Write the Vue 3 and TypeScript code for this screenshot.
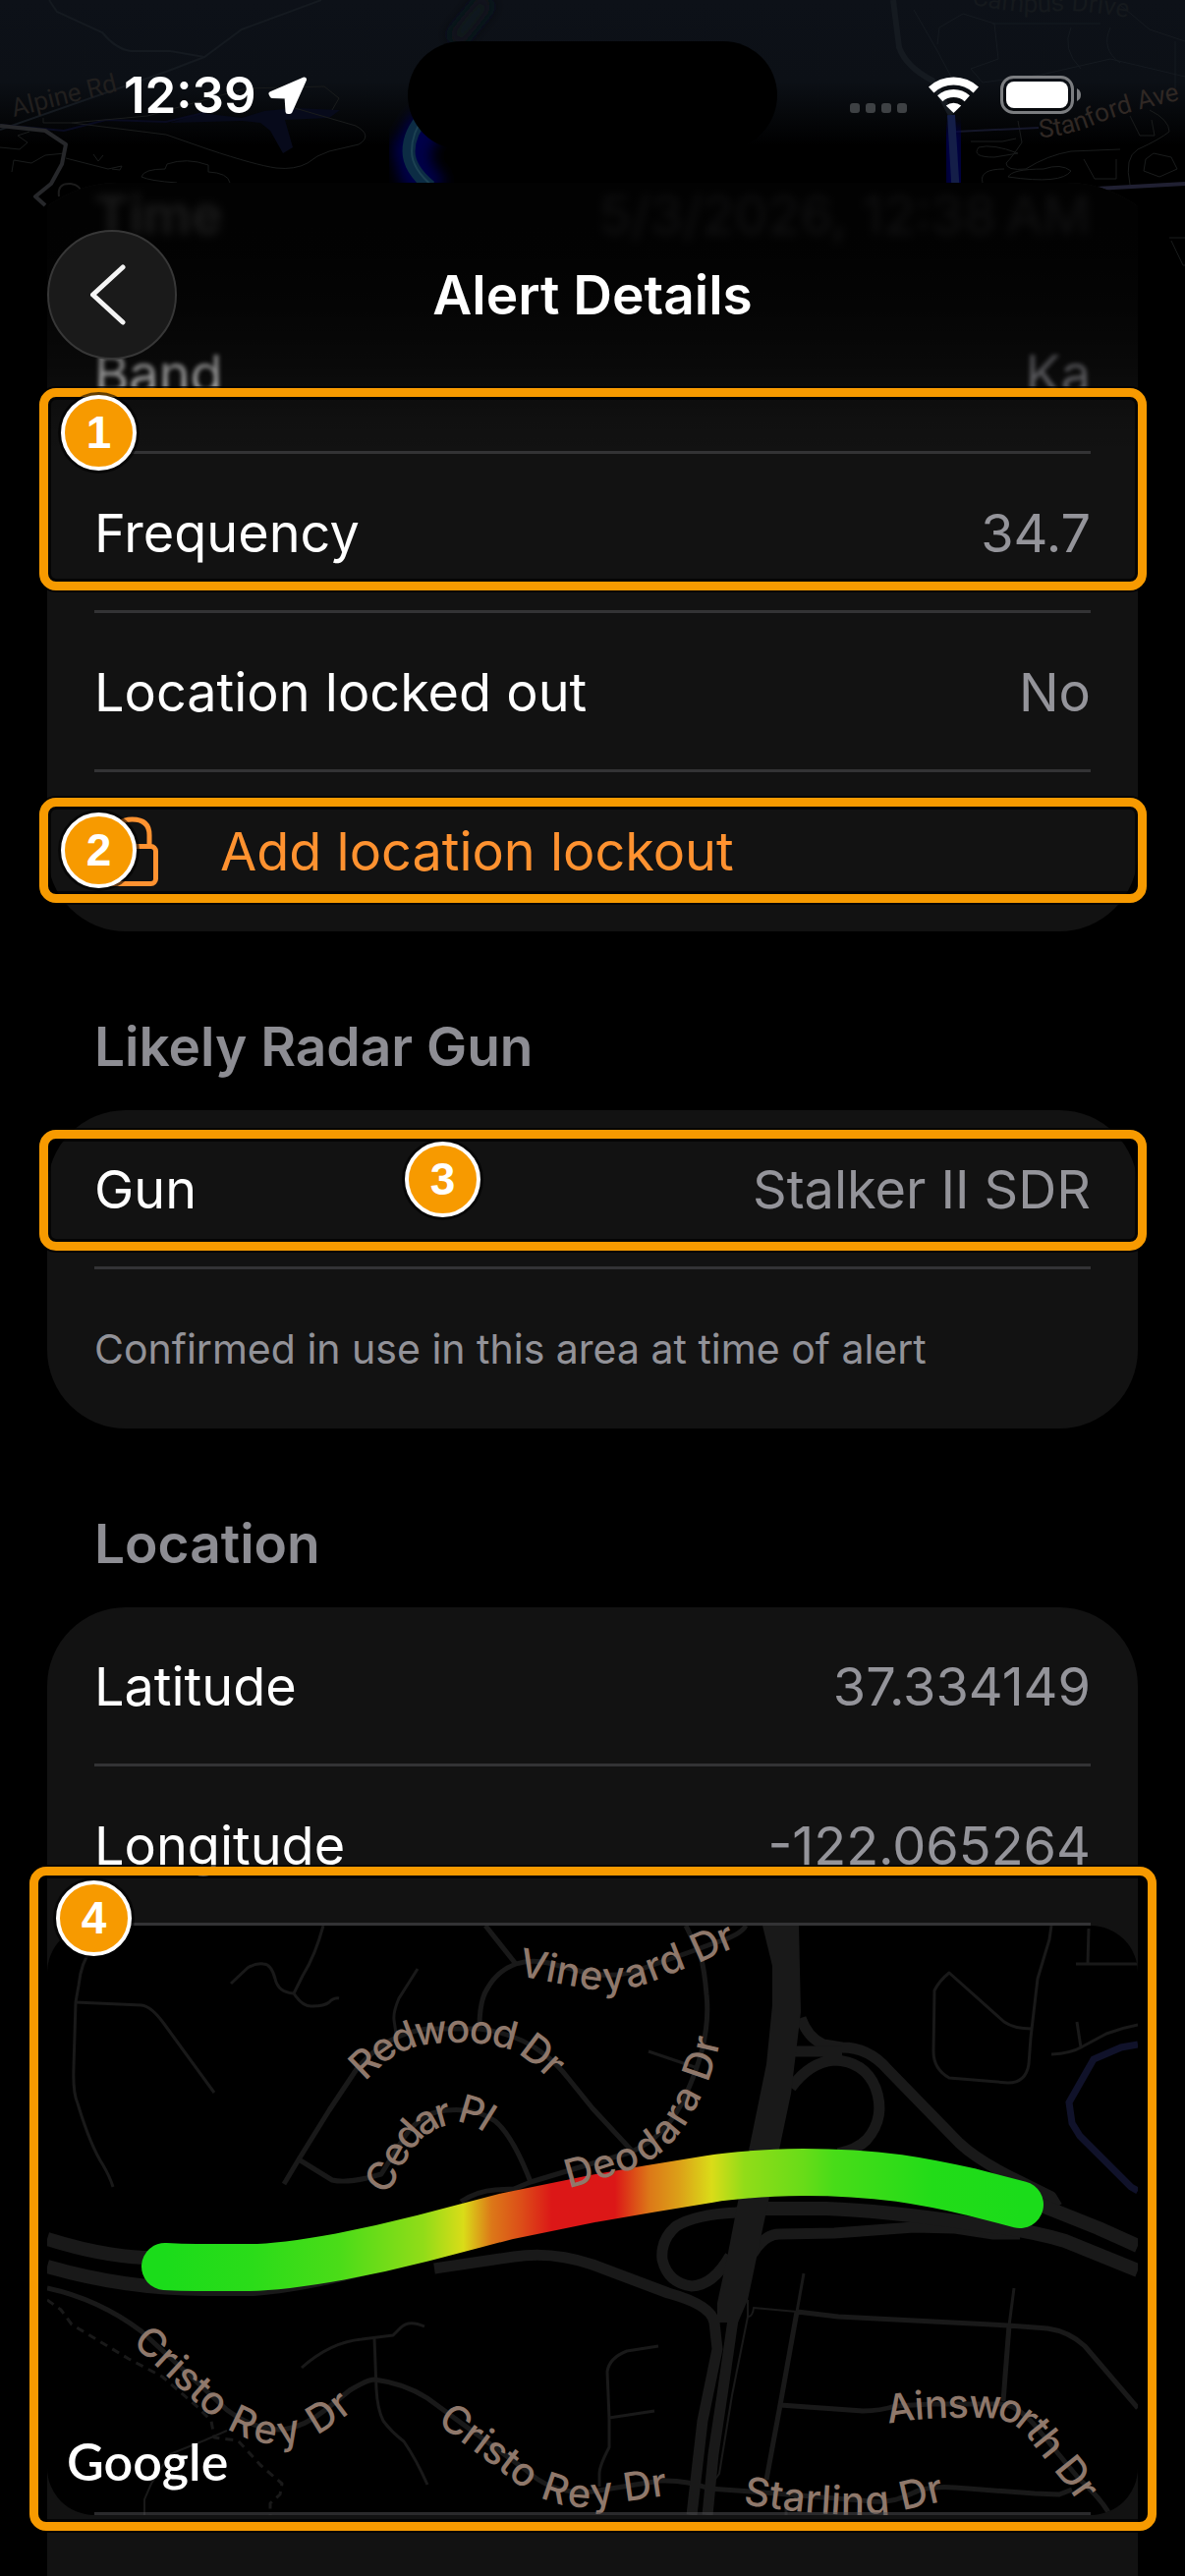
<script setup lang="ts">
interface Detail {
  label: string
  value: string
}

interface RoadGroup {
  width: number
  paths: string[]
}

interface MapLabel {
  id: string
  text: string
  line: string
}

const coordinates: Detail[] = [
  { label: 'Latitude', value: '37.334149' },
  { label: 'Longitude', value: '-122.065264' },
]

const roads: RoadGroup[] = [
  {
    width: 2,
    paths: [
      'M183 514L160 524L125 538L106 568L99 584V600',
      'M713 381V398L697 478L684 558L678 566',
      'M713 398Q718 398 719 389L763 393',
    ],
  },
  {
    width: 3,
    paths: [
      'M47 20Q34 38 32 61L29 78L27 144Q26 170 31 181Q44 224 57 244Q64 256 67 266',
      'M29 78L96 81Q106 82 119 100L170 170',
      'M187 59L204 43Q212 38 220 39Q228 39 232 54Q235 68 251 69Q260 83 270 82Q282 82 287 78Q292 73 297 74',
      'M281 0Q273 30 260 51L251 69',
      'M377 44L358 74Q352 88 353 96L355 110',
      'M612 128L659 144',
      'M1022 0L1020 14L1008 54L1001 114L999 141Q996 160 978 160L918 155Q902 146 902 128L903 66Q908 56 918 48L974 98Q984 105 1002 105',
      'M1060 3L1059 39M1047 39H1110',
      'M1022 131Q1042 130 1052 124L1078 110Q1094 104 1110 101M1048 98L1052 124',
      'M622 428L590 433Q572 440 570 454L572 501V531Q562 550 562 558V571M572 501L618 494',
      'M259 450Q288 424 320 421L352 417Q356 413 360 409Q368 401 384 408',
      'M333 420L335 471Q336 492 342 504Q350 515 363 525Q376 544 387 569',
      'M770 354L763 393M984 369L979 407M752 590V600',
    ],
  },
  {
    width: 5,
    paths: [
      'M241 263L256 238L287 188L315 146Q345 110 387 105H440Q480 110 506 131Q520 142 530 155L555 186L595 229',
      'M446 0L477 39M440 103Q440 76 448 64Q458 46 477 39Q492 34 510 38L545 47Q578 55 605 44L651 28L678 18Q706 10 711 0',
      'M256 238L290 259Q303 262 325 257L340 253L358 224Q377 190 406 188Q436 185 456 199Q474 214 492 261',
      'M421 281Q438 270 456 269L475 268L492 261L555 242L593 231Q632 214 650 172Q676 116 671 70Q669 45 665 31L650 0',
      'M0 369Q52 380 96 413L156 468L183 493Q212 514 240 513Q262 510 283 493L308 473Q326 462 333 462Q364 466 387 481L421 506L487 554Q515 580 555 576L624 565Q650 564 674 573L717 576L840 586Q860 588 880 578Q896 570 924 572L1005 578L1030 579L1043 574',
      'M763 393L746 488L732 564M763 393L805 398L978 407L1018 410Q1040 413 1056 428L1110 491M979 407L973 484',
      'M746 488L830 494Q848 494 863 489L900 487H973Q990 490 1008 512L1050 563Q1070 580 1082 600',
    ],
  },
  {
    width: 11,
    paths: [
      'M767 94Q774 114 790 121L809 124Q836 124 855 146L928 221Q948 240 990 260L1022 276L1028 286',
      'M757 128L809 128M757 165Q776 139 801 137Q832 138 843 165Q854 195 834 218Q824 228 805 232',
      'M734 288L701 292Q660 294 640 306Q624 320 626 340Q632 364 656 367Q678 366 695 336',
      'M718 334Q730 314 745 314L801 313L882 307L924 308L963 314H990',
      'M394 349L475 337Q514 331 555 345L632 374Q676 386 679 404L682 431L667 504L656 600',
      'M698 401L688 471L678 538L672 600',
    ],
  },
  {
    width: 14,
    paths: [
      'M0 319Q54 336 98 338H130',
      'M0 347Q80 370 160 370H210Q260 366 320 350L420 322L555 288Q640 268 709 262L770 258Q860 260 940 282L990 292',
      'M720 288H793Q850 290 940 303Q1000 310 1036 321L1110 351',
      'M960 262L1020 288L1070 308L1110 326',
    ],
  },
]

const streetLabels: MapLabel[] = [
  { id: 'vineyard', text: 'Vineyard Dr', line: 'M481 36Q530 46 556 50Q580 53 605 45L651 27L678 15L730 -6' },
  { id: 'redwood', text: 'Redwood Dr', line: 'M313 148L333 129Q355 110 387 106Q440 100 475 112Q500 122 530 155L550 180' },
  { id: 'cedar', text: 'Cedar Pl', line: 'M332 267L344 248Q358 216 375 203Q400 184 430 187Q455 193 475 220' },
  { id: 'deodara', text: 'Deodara Dr', line: 'M527 253L555 245L593 233Q622 220 640 190Q664 150 671 110L672 60' },
  { id: 'cristo-west', text: 'Cristo Rey Dr', line: 'M96 414L156 470L183 494Q212 514 240 513Q262 510 283 496L330 460' },
  { id: 'cristo-east', text: 'Cristo Rey Dr', line: 'M405 494L487 556Q515 576 545 577Q575 574 595 570L650 562' },
  { id: 'ainsworth', text: 'Ainsworth Dr', line: 'M854 492L882 488Q930 484 970 487Q1000 494 1016 520L1050 562L1080 605' },
  { id: 'starling', text: 'Starling Dr', line: 'M710 574Q760 582 800 584Q840 587 870 580L940 564' },
]

const heatStops: Array<[number, string]> = [
  [120, '#1bdc1a'],
  [210, '#2bdc19'],
  [298, '#4bdc18'],
  [383, '#92dc18'],
  [424, '#dadc18'],
  [452, '#dc7818'],
  [483, '#dc4c18'],
  [514, '#dc1717'],
  [578, '#dc1717'],
  [613, '#dc7818'],
  [643, '#dca018'],
  [676, '#dadc18'],
  [709, '#92dc18'],
  [770, '#68dc18'],
  [801, '#48dc18'],
  [901, '#22dc18'],
  [990, '#1bdc1a'],
]

const heatOffset = (x: number): string => ((x - 96) / 918).toFixed(3)
</script>

<template>
  <div class="screen">
    <!-- Dimmed map behind the sheet -->
    <svg class="backdrop" viewBox="0 0 1206 330" fill="none" aria-hidden="true">
      <defs>
        <linearGradient id="sky" x1="0" y1="0" x2="0" y2="1">
          <stop offset="0" stop-color="#0d1118" />
          <stop offset=".25" stop-color="#0c1016" />
          <stop offset=".45" stop-color="#000" />
        </linearGradient>
        <filter id="glow" x="-100%" y="-50%" width="300%" height="200%">
          <feGaussianBlur stdDeviation="7" />
        </filter>
        <path id="stanford" d="M1058 140Q1090 138 1116 126Q1150 112 1206 101" />
        <path id="campus" d="M988 4Q1040 16 1080 11Q1110 10 1180 24" />
      </defs>
      <rect width="1206" height="330" fill="url(#sky)" />
      <g stroke="#151a20" stroke-width="2">
        <path d="M50 0L58 12L104 33Q118 50 133 52H173L208 58" />
        <path d="M327 0L246 30L208 58L169 73L0 132" />
        <path d="M909 0L915 48Q922 68 949 82L968 117" stroke-width="6" />
        <path d="M930 10L953 50L970 82M954 45L956 28L980 14L1012 24L1016 60L988 70L1000 84L1060 76L1130 60L1206 78M1010 24L1120 24M1090 28Q1080 50 1100 70M1130 28Q1120 50 1140 64M1140 5L1170 30L1206 42M1196 42V90" stroke-width="1" />
      </g>
      <path d="M173 125L204 115L246 120L269 113L300 110L346 112L335 120L290 122L298 150L288 156L275 133L265 125L246 123Z" fill="#070a1b" />
      <path d="M0 127L65 133L108 122L169 124L215 113" stroke="#090b20" stroke-width="2" />
      <g stroke="#1a1c1c" stroke-width="1">
        <path d="M73 125L169 137L212 152Q260 168 281 171Q300 173 313 166Q322 158 335 154L365 147Q380 138 362 128L300 110" />
        <path d="M44 120V125H73L150 118L250 90L330 88L345 100L338 112M0 150L20 152L28 145L18 138L30 134M12 175L14 163L32 166L46 158L66 156M67 161L110 172L124 169L122 173L114 172M95 157L100 164L105 158" />
        <path d="M144 180Q146 172 168 172L170 167Q190 160 212 168V175Q232 176 234 186M144 180Q152 184 180 186" />
        <path d="M988 144H1020L1034 141M1036 123L1040 145Q1030 160 1024 166Q1024 174 1044 172Q1066 158 1090 154L1140 152M1036 156Q1010 146 996 150Q988 160 1012 160L1036 156M1000 186Q996 172 1022 172M1026 180Q1030 172 1062 172Q1080 166 1090 174Q1080 188 1026 180M1103 162L1114 182H1136V162M1150 188Q1144 160 1158 152Q1180 142 1190 134Q1190 122 1170 112M1150 118L1160 138H1175L1172 122M1166 162L1174 156L1192 160L1198 172L1180 180L1164 174Z" />
        <path d="M1190 242H1206M1192 245L1204 270H1206" />
      </g>
      <path d="M0 128L46 133L67 147L63 167L52 187L36 200L46 209" stroke="#26272a" stroke-width="4" stroke-linejoin="round" />
      <path d="M60 200Q58 186 72 187Q82 188 84 198" stroke="#1c1c1c" stroke-width="2" />
      <path d="M1116 192L1206 187" stroke="#202032" stroke-width="4" />
      <path d="M972 134L1057 130" stroke="#15172a" stroke-width="2" />
      <path d="M496 0L462 42" stroke="#0d191f" stroke-width="18" filter="url(#glow)" />
      <path d="M436 124L418 153L424 176L440 196" stroke="#00004a" stroke-width="36" filter="url(#glow)" />
      <path d="M432 118Q416 135 416 154Q416 172 438 190" stroke="#0c2c44" stroke-width="13" />
      <path d="M432 118Q419 135 419 154Q419 172 441 190" stroke="#1c4152" stroke-width="2" />
      <path d="M968 130L973 200" stroke="#000048" stroke-width="24" filter="url(#glow)" />
      <path d="M968 117L973 200" stroke="#141e48" stroke-width="8" />
      <g class="backdrop-label">
        <text transform="translate(14 119) rotate(-14)" fill="#211f1e">Alpine Rd</text>
        <text fill="#302824"><textPath href="#stanford">Stanford Ave</textPath></text>
        <text fill="#15191d"><textPath href="#campus">Campus Drive</textPath></text>
      </g>
    </svg>

    <header class="status">
      <div class="status-left">
        <time>12:39</time>
        <svg width="40" height="39" viewBox="0 0 40 39" aria-label="Location in use">
          <path d="M36.500 3L3 17.500L4 19.500L19 20L20 35.500L22 35.500Z" fill="#fff" stroke="#fff" stroke-width="5" stroke-linejoin="round" />
        </svg>
      </div>
      <div class="island"></div>
      <div class="status-right">
        <svg width="58" height="38" viewBox="0 0 58 38" fill="#3e4144" aria-label="No signal">
          <rect y="27" width="10" height="10" rx="3" />
          <rect x="16" y="27" width="10" height="10" rx="3" />
          <rect x="32" y="27" width="10" height="10" rx="3" />
          <rect x="48" y="27" width="10" height="10" rx="3" />
        </svg>
        <svg width="51" height="38" viewBox="0 0 51 38" fill="none" stroke="#fff" stroke-width="8" aria-label="Wi-Fi">
          <path d="M2.700 13.500A33.500 33.500 0 0 1 48.300 13.500" />
          <path d="M11.700 22.200A21 21 0 0 1 39.300 22.200" />
          <path d="M25.500 37L17.800 29.500A12 12 0 0 1 33.200 29.500Z" fill="#fff" stroke="none" />
        </svg>
        <svg width="83" height="40" viewBox="0 0 83 40" fill="none" aria-label="Battery full">
          <rect x="1.500" y="1.500" width="72" height="36" rx="12" stroke="#7b7d80" stroke-width="3" />
          <rect x="6" y="6" width="63" height="27" rx="8" fill="#fff" />
          <path d="M78 13Q82 15 82 19.500Q82 24 78 26Z" fill="#7b7d80" />
        </svg>
      </div>
    </header>

    <main class="sheet">
      <div class="navbar">
        <button class="back" type="button" aria-label="Back">
          <svg width="44" height="68" viewBox="0 0 44 68" fill="none" stroke="#f4f4f4" stroke-width="5" stroke-linecap="round" stroke-linejoin="round">
            <path d="M33 6L2.500 34L33 62" />
          </svg>
        </button>
        <h1>Alert Details</h1>
      </div>

      <dl class="card first">
        <div class="row far">
          <dt>Time</dt>
          <dd>5/3/2026, 12:38&#8239;AM</dd>
        </div>
        <div class="row near">
          <dt>Band</dt>
          <dd>Ka</dd>
        </div>
        <div class="row">
          <dt>Frequency</dt>
          <dd>34.7</dd>
          <div class="callout callout-frequency"><span class="badge">1</span></div>
        </div>
        <div class="row">
          <dt>Location locked out</dt>
          <dd>No</dd>
        </div>
        <div class="row last">
          <button class="lockout" type="button">
            <svg width="54" height="74" viewBox="0 0 54 74" fill="none" stroke="#ff9230" stroke-width="5" aria-hidden="true">
              <rect x="2.500" y="31.500" width="48" height="38" rx="5" />
              <path d="M10 31V20Q10 4 26.500 4Q44 4 44 20V31" />
            </svg>
            Add location lockout
          </button>
          <div class="callout callout-lockout"><span class="badge">2</span></div>
        </div>
      </dl>

      <h2>Likely Radar Gun</h2>
      <dl class="card">
        <div class="row">
          <dt>Gun</dt>
          <dd>Stalker II SDR</dd>
          <div class="callout callout-gun"><span class="badge">3</span></div>
        </div>
        <div class="row last">
          <dd class="note">Confirmed in use in this area at time of alert</dd>
        </div>
      </dl>

      <h2>Location</h2>
      <section class="card open">
        <dl>
          <div v-for="item in coordinates" :key="item.label" class="row">
            <dt>{{ item.label }}</dt>
            <dd>{{ item.value }}</dd>
          </div>
        </dl>
        <div class="map-row">
          <svg class="map" viewBox="0 0 1110 600" fill="none" role="img" aria-label="Signal strength along the route">
            <defs>
              <linearGradient id="heat" gradientUnits="userSpaceOnUse" x1="96" y1="0" x2="1014" y2="0">
                <stop v-for="[x, color] in heatStops" :key="x" :offset="heatOffset(x)" :stop-color="color" />
              </linearGradient>
              <path v-for="label in streetLabels" :id="label.id" :key="label.id" :d="label.line" />
            </defs>
            <rect width="1110" height="600" fill="#000" />
            <g stroke="#191919" stroke-linejoin="round">
              <g v-for="group in roads" :key="group.width" :stroke-width="group.width">
                <path v-for="d in group.paths" :key="d" :d="d" />
              </g>
              <path stroke-width="3" stroke-dasharray="8 6" d="M0 381L14 391L25 406L83 441L117 459L152 489L167 504L170 521L194 524L217 549L239 568L237 579L227 588V600" />
            </g>
            <path d="M728 0L738 41V81L732 141L714 229L703 281L693 333L682 384V404H703L713 381L723 333L734 281L745 228L757 171L767 88L765 0Z" fill="#191919" />
            <path d="M1110 121L1093 124L1065 136L1040 180L1043 201L1051 214L1103 266L1110 270" stroke="#10122a" stroke-width="7" />
            <path
              stroke="url(#heat)"
              stroke-width="48"
              stroke-linecap="round"
              stroke-linejoin="round"
              d="M120 347Q136 348 152 348H205Q237 348 298 337Q340 329 383 318L467 296L555 278L613 268L674 258Q709 252 770 251Q820 251 867 257Q901 262 940 271L990 284"
            />
            <g class="street">
              <text v-for="label in streetLabels" :key="label.id"><textPath :href="`#${label.id}`">{{ label.text }}</textPath></text>
            </g>
            <text class="brand" x="20" y="565">Google</text>
          </svg>
          <div class="callout callout-map"><span class="badge">4</span></div>
        </div>
      </section>
    </main>
  </div>
</template>

<style>
body {
  margin: 0;
  background: #000;
}
</style>

<style scoped>
.screen {
  position: relative;
  display: flex;
  flex-direction: column;
  min-height: 100vh;
  overflow: hidden;
  background: #000;
  color: #fff;
  font-family: Inter, "Liberation Sans", sans-serif;
  font-size: 54px;
  line-height: 68px;
}

.backdrop {
  position: absolute;
  top: 0;
  left: 0;
  width: 100%;
}

.backdrop-label {
  font-family: Roboto, sans-serif;
  font-size: 26px;
}

.status {
  position: relative;
  display: grid;
  grid-template-columns: 1fr 376px 1fr;
  align-items: center;
  height: 110px;
  padding: 42px 0 34px;
}

.status-left,
.status-right {
  display: flex;
  align-items: center;
}

.status-left {
  gap: 12px;
  padding-left: 126px;
  font-size: 51px;
  font-weight: 600;
}

.status-right {
  justify-content: flex-end;
  gap: 22px;
  padding-right: 105px;
}

.island {
  height: 110px;
  border-radius: 55px;
  background: #000;
}

.sheet {
  position: relative;
  display: flex;
  flex: 1;
  flex-direction: column;
  padding: 0 48px;
  overflow: hidden;
  border-radius: 120px 120px 0 0;
  background: #000;
}

.navbar {
  position: absolute;
  z-index: 2;
  top: 0;
  right: 0;
  left: 0;
  display: grid;
  grid-template-columns: 132px 1fr 132px;
  align-items: center;
  height: 132px;
  padding: 48px 48px 96px;
  background: linear-gradient(rgba(0, 0, 0, 0.9) 0, rgba(0, 0, 0, 0.88) 72px, rgba(0, 0, 0, 0.72) 130px, rgba(0, 0, 0, 0.5) 186px, rgba(0, 0, 0, 0.12) 240px, transparent 276px);
}

.navbar h1 {
  margin: 0;
  font-size: 55px;
  font-weight: 600;
  text-align: center;
}

.back {
  display: flex;
  align-items: center;
  justify-content: center;
  width: 132px;
  height: 132px;
  padding: 0;
  border: 2px solid #373737;
  border-radius: 50%;
  background: #1a1a1a;
}

.card {
  margin: 0;
  border-radius: 80px;
  background: #121212;
}

.first {
  margin-top: -48px;
}

.open {
  flex: 1;
  border-radius: 80px 80px 0 0;
}

.open dl {
  margin: 0;
}

.row {
  position: relative;
  display: flex;
  align-items: center;
  justify-content: space-between;
  height: 162px;
  padding: 0 48px;
}

.row::after,
.map-row::after {
  position: absolute;
  right: 48px;
  bottom: 0;
  left: 48px;
  height: 3px;
  background: rgba(84, 84, 88, 0.5);
  content: "";
}

.row.far::after,
.row.last::after {
  content: none;
}

dd {
  margin: 0;
  color: rgba(235, 235, 245, 0.6);
}

.far dt {
  font-weight: 600;
  filter: blur(5px);
}

.far dd {
  filter: blur(5px);
}

.near dt,
.near dd {
  filter: blur(2px);
}

.note {
  font-size: 41px;
}

.lockout {
  display: flex;
  align-items: center;
  gap: 62px;
  padding: 0 12px;
  border: 0;
  background: none;
  color: #ff9230;
  font: inherit;
}

h2 {
  margin: 0;
  padding: 83px 48px 31px;
  color: rgba(235, 235, 245, 0.6);
  font-size: 55px;
  font-weight: 600;
}

.map-row {
  position: relative;
}

.map {
  display: block;
  width: 100%;
  border-radius: 48px;
}

.street {
  dominant-baseline: central;
  fill: #8f786b;
  font-size: 40px;
  font-weight: 500;
}

.brand {
  fill: #fff;
  font-family: Lato, sans-serif;
  font-size: 52px;
  font-weight: 600;
}

.callout {
  position: absolute;
  z-index: 3;
  right: -9px;
  left: -8px;
  border: 9px solid #f79a00;
  border-radius: 17px;
  box-shadow: 0 0 0 2px rgba(0, 0, 0, 0.7), inset 0 0 0 3px rgba(0, 0, 0, 0.7);
}

.badge {
  position: absolute;
  top: -2px;
  left: 13px;
  box-sizing: border-box;
  width: 77px;
  height: 77px;
  border: 4px solid #fff;
  border-radius: 50%;
  background: #f79a00;
  box-shadow: 0 0 0 3px rgba(0, 0, 0, 0.6);
  font-family: "Liberation Sans", sans-serif;
  font-size: 46px;
  font-weight: 700;
  text-align: center;
}

.callout-frequency {
  top: -67px;
  bottom: 23px;
}

.callout-lockout {
  top: 26px;
  bottom: 29px;
}

.callout-lockout .badge {
  top: 6px;
}

.callout-gun {
  top: 20px;
  bottom: 19px;
}

.callout-gun .badge {
  top: 3px;
  left: 363px;
}

.callout-map {
  top: -60px;
  right: -19px;
  bottom: -16px;
  left: -18px;
}

.callout-map .badge {
  top: 5px;
  left: 18px;
}
</style>
